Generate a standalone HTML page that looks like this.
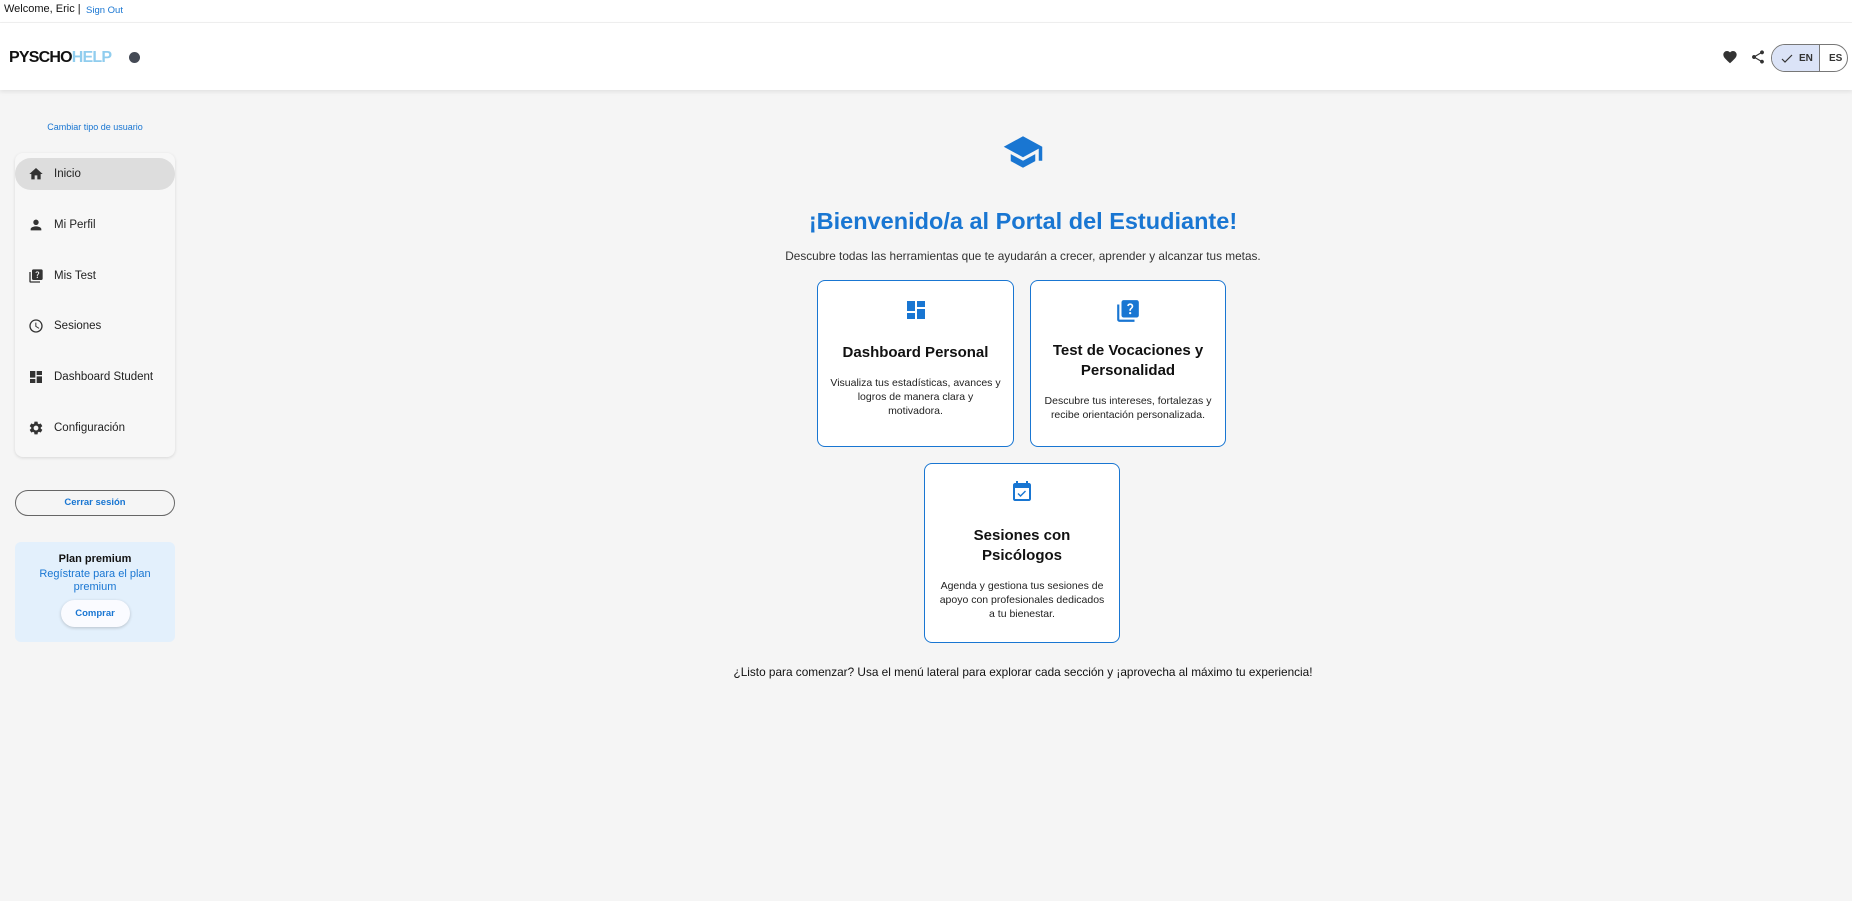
<!DOCTYPE html>
<html><head><meta charset="utf-8"><style>
*{box-sizing:border-box;margin:0;padding:0}
body{width:1852px;height:901px;background:#f5f5f5;font-family:"Liberation Sans",Arial,sans-serif;position:relative;overflow:hidden;color:#222}
.a{position:absolute}
.top{left:0;top:0;width:1852px;height:23px;background:#fff;border-bottom:1px solid #f0f0f0}
.hdr{left:0;top:23px;width:1852px;height:67px;background:#fff;box-shadow:0 2px 4px rgba(0,0,0,.08)}
.nav{left:15px;top:153px;width:160px;height:304px;background:#f7f7f7;border-radius:8px;box-shadow:0 1px 3px rgba(0,0,0,.12)}
.item{position:absolute;left:1px;width:158px;height:32px;font-size:11.5px;color:#222;display:flex;align-items:center}
.item svg{position:absolute;left:12px}
.item span{position:absolute;left:38px}
.card{position:absolute;background:#fff;border:1px solid #1976d2;border-radius:8px;text-align:center}
.card h3{font-size:15px;font-weight:bold;color:#111;line-height:20px}
.card p{font-size:10.5px;line-height:14px;color:#222;white-space:nowrap}
</style></head><body>
<div class="a top"></div>
<div class="a" style="left:4px;top:3px;font-size:11px;color:#111">Welcome, Eric |</div>
<div class="a" style="left:86px;top:5px;font-size:9.5px;color:#1976d2">Sign Out</div>
<div class="a hdr"></div>
<div class="a" style="left:9px;top:49px;font-size:16px;font-weight:bold;letter-spacing:-0.8px"><span style="color:#111">PYSCHO</span><span style="color:#90cdee">HELP</span></div>
<div class="a" style="left:129px;top:52px;width:11px;height:11px;border-radius:50%;background:#444a55"></div>
<svg class="a" style="left:1722px;top:49px" width="16" height="16" viewBox="0 0 24 24"><path fill="#333" d="M12 21.35l-1.45-1.32C5.4 15.36 2 12.28 2 8.5 2 5.42 4.42 3 7.5 3c1.74 0 3.41.81 4.5 2.09C13.09 3.81 14.76 3 16.5 3 19.58 3 22 5.42 22 8.5c0 3.78-3.4 6.86-8.55 11.54L12 21.35z"/></svg>
<svg class="a" style="left:1750px;top:48px" width="16" height="18" viewBox="0 0 24 24"><path fill="#333" d="M18 16.08c-.76 0-1.44.3-1.96.77L8.91 12.7c.05-.23.09-.46.09-.7s-.04-.47-.09-.7l7.05-4.11c.54.5 1.25.81 2.04.81 1.66 0 3-1.34 3-3s-1.34-3-3-3-3 1.34-3 3c0 .24.04.47.09.7L8.04 9.81C7.5 9.31 6.79 9 6 9c-1.66 0-3 1.34-3 3s1.34 3 3 3c.79 0 1.5-.31 2.04-.81l7.12 4.16c-.05.21-.08.43-.08.65 0 1.61 1.31 2.92 2.92 2.92s2.920-1.31 2.92-2.92-1.31-2.92-2.92-2.92z"/></svg>
<div class="a" style="left:1771px;top:44px;width:77px;height:28px;border:1px solid #777;border-radius:14px;overflow:hidden;font-size:10px;font-weight:bold;color:#333">
<div style="position:absolute;left:0;top:0;width:48px;height:28px;background:#dbe3f7;border-right:1px solid #777"></div>
<svg style="position:absolute;left:9px;top:9px" width="12" height="10" viewBox="0 0 12 10"><path d="M1 5l3 3 7-7" stroke="#333" fill="none" stroke-width="1.2"/></svg>
<span style="position:absolute;left:27px;top:8px">EN</span><span style="position:absolute;left:57px;top:8px">ES</span></div>

<div class="a" style="left:0;width:190px;top:122px;text-align:center;font-size:9px;color:#1976d2">Cambiar tipo de usuario</div>
<div class="a nav">
<div style="position:absolute;left:0;top:5px;width:160px;height:32px;background:#ddd;border-radius:16px"></div>
<div class="item" style="top:5px"><svg width="16" height="16" viewBox="0 0 24 24"><path fill="#333" d="M10 20v-6h4v6h5v-8h3L12 3 2 12h3v8z"/></svg><span>Inicio</span></div>
<div class="item" style="top:56px"><svg width="16" height="16" viewBox="0 0 24 24"><path fill="#333" d="M12 12c2.21 0 4-1.79 4-4s-1.79-4-4-4-4 1.79-4 4 1.79 4 4 4zm0 2c-2.67 0-8 1.34-8 4v2h16v-2c0-2.66-5.33-4-8-4z"/></svg><span>Mi Perfil</span></div>
<div class="item" style="top:107px"><svg width="16" height="16" viewBox="0 0 24 24"><path fill="#333" d="M4 6H2v14c0 1.1.9 2 2 2h14v-2H4V6zm16-4H8c-1.1 0-2 .9-2 2v12c0 1.1.9 2 2 2h12c1.1 0 2-.9 2-2V4c0-1.1-.9-2-2-2zm-5.99 13c-.59 0-1.05-.47-1.05-1.05 0-.59.47-1.04 1.05-1.04.59 0 1.04.45 1.04 1.04 0 .58-.45 1.05-1.04 1.05zm2.5-6.17c-.63.93-1.23 1.21-1.56 1.81-.13.24-.18.4-.18 1.18h-1.52c0-.41-.06-1.08.26-1.65.41-.73 1.18-1.16 1.63-1.8.48-.68.21-1.94-1.14-1.94-.88 0-1.32.67-1.5 1.23l-1.37-.57C11.51 5.96 12.52 5 13.99 5c1.23 0 2.08.56 2.51 1.26.37.61.59 1.73.01 2.57z"/></svg><span>Mis Test</span></div>
<div class="item" style="top:157px"><svg width="16" height="16" viewBox="0 0 24 24"><path fill="#333" d="M11.99 2C6.47 2 2 6.48 2 12s4.47 10 9.99 10C17.52 22 22 17.52 22 12S17.52 2 11.99 2zM12 20c-4.42 0-8-3.58-8-8s3.58-8 8-8 8 3.58 8 8-3.58 8-8 8zm.5-13H11v6l5.25 3.15.75-1.23-4.5-2.67z"/></svg><span>Sesiones</span></div>
<div class="item" style="top:208px"><svg width="16" height="16" viewBox="0 0 24 24"><path fill="#333" d="M3 13h8V3H3v10zm0 8h8v-6H3v6zm10 0h8V11h-8v10zm0-18v6h8V3h-8z"/></svg><span>Dashboard Student</span></div>
<div class="item" style="top:259px"><svg width="16" height="16" viewBox="0 0 24 24"><path fill="#333" d="M19.14 12.94c.04-.3.06-.61.06-.94 0-.32-.02-.64-.07-.94l2.03-1.58a.49.49 0 00.12-.61l-1.92-3.32a.488.488 0 00-.59-.22l-2.39.96c-.5-.38-1.03-.7-1.62-.94l-.36-2.54a.484.484 0 00-.48-.41h-3.84c-.24 0-.43.17-.47.41l-.36 2.54c-.59.24-1.13.57-1.62.94l-2.39-.96c-.22-.08-.47 0-.59.22L2.74 8.87c-.12.21-.08.47.12.61l2.03 1.58c-.05.3-.07.62-.07.94s.02.64.07.94l-2.03 1.58a.49.49 0 00-.12.61l1.92 3.32c.12.22.37.29.59.22l2.39-.96c.5.38 1.03.7 1.62.94l.36 2.54c.05.24.24.41.48.41h3.84c.24 0 .44-.17.47-.41l.36-2.54c.59-.24 1.13-.56 1.62-.94l2.39.96c.22.08.47 0 .59-.22l1.92-3.32c.12-.22.07-.47-.12-.61l-2.01-1.58zM12 15.6c-1.98 0-3.6-1.62-3.6-3.6s1.62-3.6 3.6-3.6 3.6 1.62 3.6 3.6-1.62 3.6-3.6 3.6z"/></svg><span>Configuración</span></div>
</div>
<div class="a" style="left:15px;top:490px;width:160px;height:26px;border:1px solid #666;border-radius:13px;text-align:center;font-size:9.5px;line-height:24px;color:#1976d2;font-weight:bold">Cerrar sesión</div>
<div class="a" style="left:15px;top:542px;width:160px;height:100px;background:#e3f0fc;border-radius:6px;text-align:center">
<div style="margin-top:11px;font-size:11px;font-weight:bold;color:#111">Plan premium</div>
<div style="margin-top:3px;font-size:11px;line-height:13px;color:#1976d2">Regístrate para el plan<br>premium</div>
<div style="margin:6px auto 0;width:69px;height:27px;background:#fafbff;border-radius:14px;box-shadow:0 1px 3px rgba(0,0,0,.2);font-size:9.5px;font-weight:bold;line-height:27px;color:#1976d2">Comprar</div>
</div>

<svg class="a" style="left:1002px;top:136px" width="42" height="32" viewBox="0 0 24 18"><path fill="#1976d2" d="M5 10.2v4L12 18l7-3.8v-4L12 14l-7-3.8zM12 0L1 6l11 6 9-4.9V14h2V6L12 0z"/></svg>
<div class="a" style="left:0;width:2046px;top:208px;text-align:center;font-size:23.5px;font-weight:bold;color:#1976d2">¡Bienvenido/a al Portal del Estudiante!</div>
<div class="a" style="left:0;width:2046px;top:249px;text-align:center;font-size:11.8px;color:#333">Descubre todas las herramientas que te ayudarán a crecer, aprender y alcanzar tus metas.</div>

<div class="card" style="left:817px;top:280px;width:197px;height:167px">
<svg style="margin-top:17px" width="24" height="24" viewBox="0 0 24 24"><path fill="#1976d2" d="M3 13h8V3H3v10zm0 8h8v-6H3v6zm10 0h8V11h-8v10zm0-18v6h8V3h-8z"/></svg>
<h3 style="margin-top:16px">Dashboard Personal</h3>
<p style="margin-top:13px">Visualiza tus estadísticas, avances y<br>logros de manera clara y<br>motivadora.</p></div>
<div class="card" style="left:1030px;top:280px;width:196px;height:167px">
<svg style="margin-top:17px" width="26" height="26" viewBox="0 0 24 24"><path fill="#1976d2" d="M4 6H2v14c0 1.1.9 2 2 2h14v-2H4V6zm16-4H8c-1.1 0-2 .9-2 2v12c0 1.1.9 2 2 2h12c1.1 0 2-.9 2-2V4c0-1.1-.9-2-2-2zm-5.99 13c-.59 0-1.05-.47-1.05-1.05 0-.59.47-1.04 1.05-1.04.59 0 1.04.45 1.04 1.04 0 .58-.45 1.05-1.04 1.05zm2.5-6.17c-.63.93-1.23 1.21-1.56 1.81-.13.24-.18.4-.18 1.18h-1.52c0-.41-.06-1.08.26-1.65.41-.73 1.18-1.16 1.63-1.8.48-.68.21-1.94-1.14-1.94-.88 0-1.32.67-1.5 1.23l-1.37-.57C11.51 5.96 12.52 5 13.99 5c1.23 0 2.08.56 2.51 1.26.37.61.59 1.73.01 2.57z"/></svg>
<h3 style="margin-top:12px">Test de Vocaciones y<br>Personalidad</h3>
<p style="margin-top:13px">Descubre tus intereses, fortalezas y<br>recibe orientación personalizada.</p></div>
<div class="card" style="left:924px;top:463px;width:196px;height:180px">
<svg style="margin-top:16px" width="24" height="24" viewBox="0 0 24 24"><path fill="#1976d2" d="M19 3h-1V1h-2v2H8V1H6v2H5c-1.11 0-2 .9-2 2v14c0 1.1.89 2 2 2h14c1.1 0 2-.9 2-2V5c0-1.1-.9-2-2-2zm0 16H5V8h14v11zM10.5 17l5.5-5.5-1-1-4.5 4.5-2-2-1 1z"/></svg>
<h3 style="margin-top:17px">Sesiones con<br>Psicólogos</h3>
<p style="margin-top:13px">Agenda y gestiona tus sesiones de<br>apoyo con profesionales dedicados<br>a tu bienestar.</p></div>

<div class="a" style="left:0;width:2046px;top:665px;text-align:center;font-size:11.8px;color:#111">¿Listo para comenzar? Usa el menú lateral para explorar cada sección y ¡aprovecha al máximo tu experiencia!</div>
</body></html>
